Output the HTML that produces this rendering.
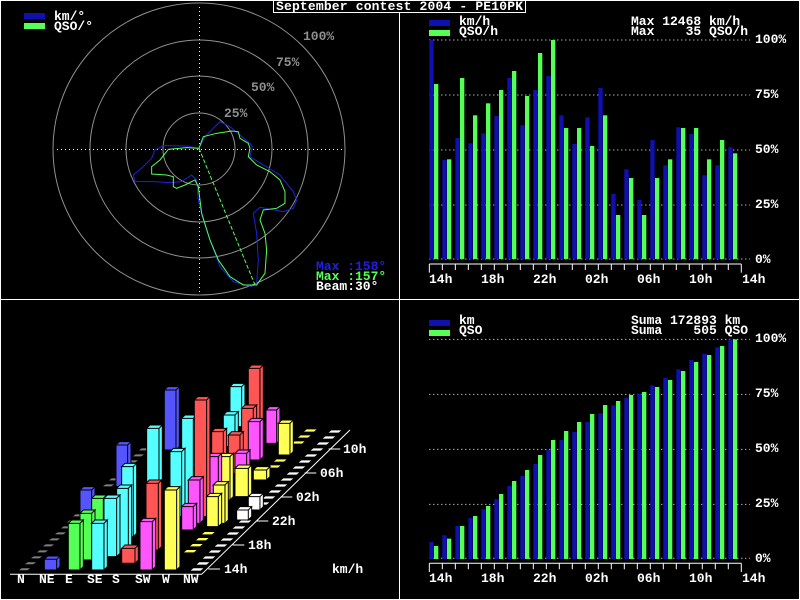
<!DOCTYPE html>
<html><head><meta charset="utf-8"><style>
html,body{margin:0;padding:0;background:#000;width:800px;height:600px;overflow:hidden}
text{font-family:"Liberation Mono","DejaVu Sans Mono",monospace;font-weight:bold;font-size:13px;white-space:pre}
</style></head><body>
<svg width="800" height="600" viewBox="0 0 800 600" xmlns="http://www.w3.org/2000/svg">
<rect x="0" y="0" width="800" height="600" fill="#000"/>
<rect x="0.5" y="0.5" width="799" height="599" fill="none" stroke="#fff"/>
<line x1="399.5" y1="0" x2="399.5" y2="600" stroke="#fff"/>
<line x1="0" y1="299.5" x2="800" y2="299.5" stroke="#fff"/>

<!-- POLAR -->
<g fill="none" stroke="#909090" stroke-width="1">
<circle cx="199" cy="149" r="36"/><circle cx="199" cy="149" r="73"/><circle cx="199" cy="149" r="109"/><circle cx="199" cy="149" r="146"/>
</g>
<line x1="57" y1="149.5" x2="343" y2="149.5" stroke="#fff" stroke-dasharray="1 3"/>
<line x1="199.5" y1="7" x2="199.5" y2="295" stroke="#fff" stroke-dasharray="1 3"/>
<g transform="scale(0.3333)" fill="none" stroke-width="3">
<path stroke="#2020e0" d="M597,445 L615,410 660,365 690,380 720,405 750,430 757,440 750,470 790,495 840,525 880,575 890,600 880,625 850,635 780,622 760,640 770,700 775,780 770,850 755,860 700,845 660,800 630,720 610,660 595,600 590,540 575,525 545,545 510,548 460,545 405,545 400,525 430,500 455,475 465,450 490,437 560,438 Z"/>
<path stroke="#55ff55" d="M597,445 L610,410 650,400 695,393 715,395 720,415 745,430 750,445 745,470 770,495 810,515 840,540 855,575 855,610 830,625 790,630 780,660 795,700 800,750 795,820 770,855 730,855 690,830 655,780 630,720 605,640 595,560 585,540 555,555 530,565 520,560 520,530 500,525 455,522 455,500 480,480 505,448 560,443 Z"/>
<line x1="597" y1="445" x2="765" y2="855" stroke="#55ff55" stroke-dasharray="12 6"/>
</g>
<g fill="#909090"><text x="303" y="40">100%</text><text x="276" y="66">75%</text><text x="251" y="91">50%</text><text x="224" y="117">25%</text></g>
<rect x="24" y="13" width="21" height="6" fill="#1010b0"/><rect x="24" y="23" width="21" height="6" fill="#55ff55"/>
<text x="54" y="20" fill="#fff">km/°</text><text x="54" y="30" fill="#fff">QSO/°</text>
<text x="316" y="270" fill="#2020e0">Max :158°</text>
<text x="316" y="280" fill="#55ff55">Max :157°</text>
<text x="316" y="290" fill="#fff">Beam:30°</text>

<!-- TITLE -->
<rect x="273.5" y="0.5" width="252" height="12" fill="#000" stroke="#fff"/>
<text x="276" y="10" fill="#fff" textLength="247">September contest 2004 - PE10PK</text>

<!-- TOP RIGHT -->
<rect x="429" y="20" width="21" height="6" fill="#1010b0"/><rect x="429" y="30" width="21" height="6" fill="#55ff55"/>
<text x="459" y="25" fill="#fff">km/h</text><text x="459" y="35" fill="#fff">QSO/h</text>
<text x="631" y="25" fill="#fff">Max 12468 km/h</text><text x="631" y="35" fill="#fff">Max    35 QSO/h</text>
<g transform="translate(400,0) scale(0.3333)">
<g stroke="#fff" stroke-width="3" stroke-dasharray="3 9"><line x1="88" y1="120" x2="1050" y2="120"/><line x1="88" y1="285" x2="1050" y2="285"/><line x1="88" y1="450" x2="1050" y2="450"/><line x1="88" y1="615" x2="1050" y2="615"/><line x1="88" y1="777" x2="1050" y2="777"/></g>
<g fill="#1010b0">
<rect x="88" y="120" width="13" height="657"/><rect x="127" y="480" width="13" height="297"/><rect x="166" y="414" width="13" height="363"/><rect x="205" y="430" width="13" height="347"/><rect x="244" y="400" width="13" height="377"/><rect x="283" y="348" width="13" height="429"/><rect x="322" y="234" width="13" height="543"/><rect x="361" y="376" width="13" height="401"/><rect x="400" y="270" width="13" height="507"/><rect x="439" y="228" width="13" height="549"/><rect x="478" y="346" width="13" height="431"/><rect x="517" y="432" width="13" height="345"/><rect x="556" y="352" width="13" height="425"/><rect x="595" y="264" width="13" height="513"/><rect x="634" y="582" width="13" height="195"/><rect x="673" y="508" width="13" height="269"/><rect x="712" y="600" width="13" height="177"/><rect x="751" y="420" width="13" height="357"/><rect x="790" y="496" width="13" height="281"/><rect x="829" y="382" width="13" height="395"/><rect x="868" y="402" width="13" height="375"/><rect x="907" y="526" width="13" height="251"/><rect x="946" y="496" width="13" height="281"/><rect x="985" y="442" width="13" height="335"/>
</g>
<g fill="#55ff55">
<rect x="102" y="252" width="13" height="525"/><rect x="141" y="478" width="13" height="299"/><rect x="180" y="234" width="13" height="543"/><rect x="219" y="346" width="13" height="431"/><rect x="258" y="310" width="13" height="467"/><rect x="297" y="270" width="13" height="507"/><rect x="336" y="213" width="13" height="564"/><rect x="375" y="288" width="13" height="489"/><rect x="414" y="159" width="13" height="618"/><rect x="453" y="120" width="13" height="657"/><rect x="492" y="384" width="13" height="393"/><rect x="531" y="384" width="13" height="393"/><rect x="570" y="438" width="13" height="339"/><rect x="609" y="346" width="13" height="431"/><rect x="648" y="645" width="13" height="132"/><rect x="687" y="534" width="13" height="243"/><rect x="726" y="645" width="13" height="132"/><rect x="765" y="534" width="13" height="243"/><rect x="804" y="478" width="13" height="299"/><rect x="843" y="384" width="13" height="393"/><rect x="882" y="384" width="13" height="393"/><rect x="921" y="478" width="13" height="299"/><rect x="960" y="420" width="13" height="357"/><rect x="999" y="460" width="13" height="317"/>
</g>
<path stroke="#fff" stroke-width="3" fill="none" d="M88,792 H1024 M88,792 V818 M1024,792 V818 M127,792v18 M166,792v18 M205,792v18 M244,792v18 M283,792v18 M322,792v18 M361,792v18 M400,792v18 M439,792v18 M478,792v18 M517,792v18 M556,792v18 M595,792v18 M634,792v18 M673,792v18 M712,792v18 M751,792v18 M790,792v18 M829,792v18 M868,792v18 M907,792v18 M946,792v18 M985,792v18"/>
</g>
<g fill="#fff"><text x="755" y="43">100%</text><text x="755" y="98">75%</text><text x="755" y="153">50%</text><text x="755" y="208">25%</text><text x="755" y="263">0%</text>
<text x="429" y="283">14h</text><text x="481" y="283">18h</text><text x="533" y="283">22h</text><text x="585" y="283">02h</text><text x="637" y="283">06h</text><text x="689" y="283">10h</text><text x="742" y="283">14h</text></g>

<!-- BOTTOM RIGHT -->
<rect x="429" y="320" width="21" height="6" fill="#1010b0"/><rect x="429" y="330" width="21" height="6" fill="#55ff55"/>
<text x="459" y="324" fill="#fff">km</text><text x="459" y="334" fill="#fff">QSO</text>
<text x="631" y="324" fill="#fff">Suma 172893 km</text><text x="631" y="334" fill="#fff">Suma    505 QSO</text>
<g transform="translate(400,300) scale(0.3333)">
<g stroke="#fff" stroke-width="3" stroke-dasharray="3 9"><line x1="88" y1="118" x2="1050" y2="118"/><line x1="88" y1="283" x2="1050" y2="283"/><line x1="88" y1="448" x2="1050" y2="448"/><line x1="88" y1="613" x2="1050" y2="613"/><line x1="88" y1="775" x2="1050" y2="775"/></g>
<g fill="#1010b0">
<rect x="88" y="726" width="13" height="51"/><rect x="127" y="706" width="13" height="71"/><rect x="166" y="678" width="13" height="99"/><rect x="205" y="654" width="13" height="123"/><rect x="244" y="628" width="13" height="149"/><rect x="283" y="598" width="13" height="179"/><rect x="322" y="558" width="13" height="219"/><rect x="361" y="528" width="13" height="249"/><rect x="400" y="492" width="13" height="285"/><rect x="439" y="450" width="13" height="327"/><rect x="478" y="420" width="13" height="357"/><rect x="517" y="396" width="13" height="381"/><rect x="556" y="366" width="13" height="411"/><rect x="595" y="340" width="13" height="437"/><rect x="634" y="316" width="13" height="461"/><rect x="673" y="294" width="13" height="483"/><rect x="712" y="282" width="13" height="495"/><rect x="751" y="256" width="13" height="521"/><rect x="790" y="234" width="13" height="543"/><rect x="829" y="208" width="13" height="569"/><rect x="868" y="180" width="13" height="597"/><rect x="907" y="162" width="13" height="615"/><rect x="946" y="142" width="13" height="635"/><rect x="985" y="118" width="13" height="659"/>
</g>
<g fill="#55ff55">
<rect x="102" y="738" width="13" height="39"/><rect x="141" y="716" width="13" height="61"/><rect x="180" y="678" width="13" height="99"/><rect x="219" y="648" width="13" height="129"/><rect x="258" y="618" width="13" height="159"/><rect x="297" y="582" width="13" height="195"/><rect x="336" y="543" width="13" height="234"/><rect x="375" y="510" width="13" height="267"/><rect x="414" y="465" width="13" height="312"/><rect x="453" y="420" width="13" height="357"/><rect x="492" y="393" width="13" height="384"/><rect x="531" y="366" width="13" height="411"/><rect x="570" y="342" width="13" height="435"/><rect x="609" y="315" width="13" height="462"/><rect x="648" y="303" width="13" height="474"/><rect x="687" y="285" width="13" height="492"/><rect x="726" y="276" width="13" height="501"/><rect x="765" y="261" width="13" height="516"/><rect x="804" y="240" width="13" height="537"/><rect x="843" y="213" width="13" height="564"/><rect x="882" y="186" width="13" height="591"/><rect x="921" y="165" width="13" height="612"/><rect x="960" y="138" width="13" height="639"/><rect x="999" y="118" width="13" height="659"/>
</g>
<path stroke="#fff" stroke-width="3" fill="none" d="M88,790 H1024 M88,790 V816 M1024,790 V816 M127,790v18 M166,790v18 M205,790v18 M244,790v18 M283,790v18 M322,790v18 M361,790v18 M400,790v18 M439,790v18 M478,790v18 M517,790v18 M556,790v18 M595,790v18 M634,790v18 M673,790v18 M712,790v18 M751,790v18 M790,790v18 M829,790v18 M868,790v18 M907,790v18 M946,790v18 M985,790v18"/>
</g>
<g fill="#fff"><text x="755" y="342">100%</text><text x="755" y="397">75%</text><text x="755" y="452">50%</text><text x="755" y="507">25%</text><text x="755" y="562">0%</text>
<text x="429" y="582">14h</text><text x="481" y="582">18h</text><text x="533" y="582">22h</text><text x="585" y="582">02h</text><text x="637" y="582">06h</text><text x="689" y="582">10h</text><text x="742" y="582">14h</text></g>

<!-- BOTTOM LEFT 3D -->
<g transform="translate(0,350) scale(0.3333)">
<g fill="#808080">
<path d="M65,655 h25 l-8,6 h-25z M83,637 h25 l-8,6 h-25z M101,619 h25 l-8,6 h-25z M119,601 h25 l-8,6 h-25z M137,583 h25 l-8,6 h-25z M155,565 h25 l-8,6 h-25z M173,547 h25 l-8,6 h-25z M191,529 h25 l-8,6 h-25z M209,511 h25 l-8,6 h-25z M227,493 h25 l-8,6 h-25z M245,475 h25 l-8,6 h-25z M317,403 h25 l-8,6 h-25z M335,385 h25 l-8,6 h-25z M389,331 h25 l-8,6 h-25z M407,313 h25 l-8,6 h-25z M425,295 h25 l-8,6 h-25z"/>
</g>
<g fill="#fff">
<path d="M580,655 h30 l-8,7 h-30z M598,637 h30 l-8,7 h-30z M616,619 h30 l-8,7 h-30z M634,601 h30 l-8,7 h-30z M652,583 h30 l-8,7 h-30z M670,565 h30 l-8,7 h-30z M688,547 h30 l-8,7 h-30z M706,529 h30 l-8,7 h-30z M724,511 h30 l-8,7 h-30z M778,457 h30 l-8,7 h-30z M796,439 h30 l-8,7 h-30z M814,421 h30 l-8,7 h-30z M832,403 h30 l-8,7 h-30z M850,385 h30 l-8,7 h-30z M868,367 h30 l-8,7 h-30z M886,349 h30 l-8,7 h-30z M904,331 h30 l-8,7 h-30z M922,313 h30 l-8,7 h-30z M940,295 h30 l-8,7 h-30z M958,277 h30 l-8,7 h-30z M976,259 h30 l-8,7 h-30z M994,241 h30 l-8,7 h-30z"/>
</g>
<g fill="#ffff55">
<path d="M560,600 h30 l-8,7 h-30z M578,582 h30 l-8,7 h-30z M596,564 h30 l-8,7 h-30z M614,546 h30 l-8,7 h-30z M812,346 h30 l-8,7 h-30z M830,328 h30 l-8,7 h-30z M884,274 h30 l-8,7 h-30z M902,256 h30 l-8,7 h-30z M920,238 h30 l-8,7 h-30z"/>
</g>
<g stroke="#000" stroke-width="3">
<path fill="#55ffff" d="M690,110 h35 v120 h-35z M690,110 l10,-10 h35 l-10,10z M725,110 l10,-10 v120 l-10,10z"/>
<path fill="#ff55ff" d="M798,180 h32 v100 h-32z M798,180 l10,-10 h32 l-10,10z M830,180 l10,-10 v100 l-10,10z"/>
<path fill="#ff5555" d="M745,55 h35 v235 h-35z M745,55 l10,-10 h35 l-10,10z M780,55 l10,-10 v235 l-10,10z"/>
<path fill="#55ffff" d="M670,195 h35 v95 h-35z M670,195 l10,-10 h35 l-10,10z M705,195 l10,-10 v95 l-10,10z"/>
<path fill="#5555ff" d="M493,120 h35 v180 h-35z M493,120 l10,-10 h35 l-10,10z M528,120 l10,-10 v180 l-10,10z"/>
<path fill="#ff5555" d="M725,175 h35 v135 h-35z M725,175 l10,-10 h35 l-10,10z M760,175 l10,-10 v135 l-10,10z"/>
<path fill="#ffff55" d="M835,220 h35 v95 h-35z M835,220 l10,-10 h35 l-10,10z M870,220 l10,-10 v95 l-10,10z"/>
<path fill="#ff55ff" d="M745,215 h35 v115 h-35z M745,215 l10,-10 h35 l-10,10z M780,215 l10,-10 v115 l-10,10z"/>
<path fill="#ff5555" d="M685,255 h35 v115 h-35z M685,255 l10,-10 h35 l-10,10z M720,255 l10,-10 v115 l-10,10z"/>
<path fill="#ff55ff" d="M705,310 h35 v60 h-35z M705,310 l10,-10 h35 l-10,10z M740,310 l10,-10 v60 l-10,10z"/>
<path fill="#ffff55" d="M760,360 h40 v30 h-40z M760,360 l10,-10 h40 l-10,10z M800,360 l10,-10 v30 l-10,10z"/>
<path fill="#5555ff" d="M348,285 h35 v125 h-35z M348,285 l10,-10 h35 l-10,10z M383,285 l10,-10 v125 l-10,10z"/>
<path fill="#ff5555" d="M635,245 h35 v175 h-35z M635,245 l10,-10 h35 l-10,10z M670,245 l10,-10 v175 l-10,10z"/>
<path fill="#ffff55" d="M705,355 h40 v85 h-40z M705,355 l10,-10 h40 l-10,10z M745,355 l10,-10 v85 l-10,10z"/>
<path fill="#ffff55" d="M655,320 h35 v130 h-35z M655,320 l10,-10 h35 l-10,10z M690,320 l10,-10 v130 l-10,10z"/>
<path fill="#55ffff" d="M545,205 h35 v265 h-35z M545,205 l10,-10 h35 l-10,10z M580,205 l10,-10 v265 l-10,10z"/>
<path fill="#ff55ff" d="M620,320 h35 v160 h-35z M620,320 l10,-10 h35 l-10,10z M655,320 l10,-10 v160 l-10,10z"/>
<path fill="#ffffff" d="M745,440 h35 v40 h-35z M745,440 l10,-10 h35 l-10,10z M780,440 l10,-10 v40 l-10,10z"/>
<path fill="#ff5555" d="M583,150 h37 v350 h-37z M583,150 l10,-10 h37 l-10,10z M620,150 l10,-10 v350 l-10,10z"/>
<path fill="#55ffff" d="M510,305 h35 v195 h-35z M510,305 l10,-10 h35 l-10,10z M545,305 l10,-10 v195 l-10,10z"/>
<path fill="#5555ff" d="M240,420 h35 v80 h-35z M240,420 l10,-10 h35 l-10,10z M275,420 l10,-10 v80 l-10,10z"/>
<path fill="#ffffff" d="M710,480 h35 v30 h-35z M710,480 l10,-10 h35 l-10,10z M745,480 l10,-10 v30 l-10,10z"/>
<path fill="#55ffff" d="M440,235 h37 v285 h-37z M440,235 l10,-10 h37 l-10,10z M477,235 l10,-10 v285 l-10,10z"/>
<path fill="#ff55ff" d="M565,390 h35 v130 h-35z M565,390 l10,-10 h35 l-10,10z M600,390 l10,-10 v130 l-10,10z"/>
<path fill="#ffff55" d="M640,405 h35 v115 h-35z M640,405 l10,-10 h35 l-10,10z M675,405 l10,-10 v115 l-10,10z"/>
<path fill="#ffff55" d="M620,440 h35 v90 h-35z M620,440 l10,-10 h35 l-10,10z M655,440 l10,-10 v90 l-10,10z"/>
<path fill="#ff55ff" d="M545,470 h35 v70 h-35z M545,470 l10,-10 h35 l-10,10z M580,470 l10,-10 v70 l-10,10z"/>
<path fill="#55ffff" d="M365,350 h35 v210 h-35z M365,350 l10,-10 h35 l-10,10z M400,350 l10,-10 v210 l-10,10z"/>
<path fill="#55ffff" d="M350,415 h35 v185 h-35z M350,415 l10,-10 h35 l-10,10z M385,415 l10,-10 v185 l-10,10z"/>
<path fill="#ff5555" d="M438,400 h37 v200 h-37z M438,400 l10,-10 h37 l-10,10z M475,400 l10,-10 v200 l-10,10z"/>
<path fill="#55ff55" d="M275,445 h35 v155 h-35z M275,445 l10,-10 h35 l-10,10z M310,445 l10,-10 v155 l-10,10z"/>
<path fill="#55ffff" d="M312,445 h38 v175 h-38z M312,445 l10,-10 h38 l-10,10z M350,445 l10,-10 v175 l-10,10z"/>
<path fill="#55ff55" d="M240,490 h35 v140 h-35z M240,490 l10,-10 h35 l-10,10z M275,490 l10,-10 v140 l-10,10z"/>
<path fill="#ff5555" d="M365,595 h40 v45 h-40z M365,595 l10,-10 h40 l-10,10z M405,595 l10,-10 v45 l-10,10z"/>
<path fill="#5555ff" d="M133,628 h37 v32 h-37z M133,628 l10,-10 h37 l-10,10z M170,628 l10,-10 v32 l-10,10z"/>
<path fill="#55ff55" d="M205,520 h35 v140 h-35z M205,520 l10,-10 h35 l-10,10z M240,520 l10,-10 v140 l-10,10z"/>
<path fill="#55ffff" d="M275,520 h37 v140 h-37z M275,520 l10,-10 h37 l-10,10z M312,520 l10,-10 v140 l-10,10z"/>
<path fill="#ff55ff" d="M420,515 h37 v145 h-37z M420,515 l10,-10 h37 l-10,10z M457,515 l10,-10 v145 l-10,10z"/>
<path fill="#ffff55" d="M493,420 h37 v240 h-37z M493,420 l10,-10 h37 l-10,10z M530,420 l10,-10 v240 l-10,10z"/>
</g>
<path stroke="#fff" stroke-width="3" fill="none" d="M30,673 H605 L1050,240 M625,657 h35 M698,585 h35 M770,513 h35 M842,441 h35 M914,369 h35 M986,297 h35"/>
</g>
<g fill="#fff">
<text x="17" y="583">N</text><text x="39" y="583">NE</text><text x="65" y="583">E</text><text x="87" y="583">SE</text><text x="112" y="583">S</text><text x="135" y="583">SW</text><text x="162" y="583">W</text><text x="183" y="583">NW</text>
<text x="224" y="573">14h</text><text x="248" y="549">18h</text><text x="272" y="525">22h</text><text x="296" y="501">02h</text><text x="320" y="477">06h</text><text x="343" y="453">10h</text>
<text x="332" y="573">km/h</text>
</g>
</svg>
</body></html>
